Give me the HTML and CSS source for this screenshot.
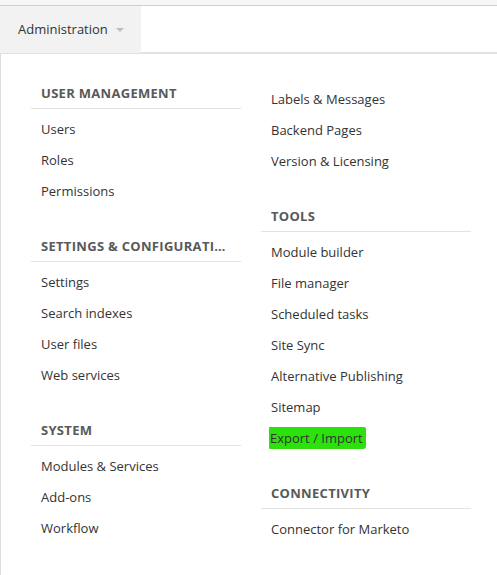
FILE: index.html
```html
<!DOCTYPE html>
<html>
<head>
<meta charset="utf-8">
<link rel="stylesheet" href="styles.css">
</head>
<body>
<div class="topstrip"></div>
<div class="header">
  <div class="tab">Administration <span class="caret"></span></div>
</div>
<div class="panel">
  <div class="col">
    <div class="section">
      <div class="heading">USER MANAGEMENT</div>
      <ul class="list">
        <li>Users</li>
        <li>Roles</li>
        <li>Permissions</li>
      </ul>
    </div>
    <div class="section">
      <div class="heading">SETTINGS &amp; CONFIGURATION</div>
      <ul class="list">
        <li>Settings</li>
        <li>Search indexes</li>
        <li>User files</li>
        <li>Web services</li>
      </ul>
    </div>
    <div class="section">
      <div class="heading">SYSTEM</div>
      <ul class="list">
        <li>Modules &amp; Services</li>
        <li>Add-ons</li>
        <li>Workflow</li>
      </ul>
    </div>
  </div>
  <div class="col">
    <div class="section">
      <ul class="list list-first">
        <li>Labels &amp; Messages</li>
        <li>Backend Pages</li>
        <li>Version &amp; Licensing</li>
      </ul>
    </div>
    <div class="section">
      <div class="heading">TOOLS</div>
      <ul class="list">
        <li>Module builder</li>
        <li>File manager</li>
        <li>Scheduled tasks</li>
        <li>Site Sync</li>
        <li>Alternative Publishing</li>
        <li>Sitemap</li>
        <li><span class="highlight">Export / Import</span></li>
      </ul>
    </div>
    <div class="section">
      <div class="heading">CONNECTIVITY</div>
      <ul class="list">
        <li>Connector for Marketo</li>
      </ul>
    </div>
  </div>
</div>
</body>
</html>
```

FILE: styles.css
```css
html, body {
  margin: 0;
  padding: 0;
  background: #ffffff;
}
body {
  font-family: "Open Sans", "Liberation Sans", sans-serif;
  font-size: 13px;
  color: #333333;
  height: 575px;
  overflow: hidden;
}
.topstrip {
  height: 5px;
  background: #f6f6f8;
  border-bottom: 1px solid #cfcfcf;
}
.header {
  height: 46px;
  border-bottom: 2px solid #e2e2e2;
  display: flex;
}
.tab {
  width: 123px;
  padding-left: 18px;
  padding-bottom: 2px;
  height: 45px;
  background: #f2f2f2;
  display: flex;
  align-items: center;
  gap: 8px;
  font-size: 13px;
  color: #333;
  margin-bottom: -1px;
}
.caret {
  width: 0;
  height: 0;
  border-left: 4px solid transparent;
  border-right: 4px solid transparent;
  border-top: 4px solid #bdbdbd;
  margin-top: 2px;
}
.panel {
  border-left: 1px solid #dddddd;
  height: 540px;
  padding: 29px 0 0 30px;
  display: flex;
  gap: 20px;
}
.col {
  width: 210px;
  display: flex;
  flex-direction: column;
  gap: 29px;
}
.heading {
  font-weight: 700;
  font-size: 13px;
  letter-spacing: 0.3px;
  color: #595959;
  line-height: 20px;
  padding: 0 10px 5px 10px;
  border-bottom: 1px solid #e3e3e3;
  white-space: nowrap;
  overflow: hidden;
  text-overflow: ellipsis;
}
.list {
  list-style: none;
  margin: 0;
  padding: 5px 0 0 0;
}
.list-first {
  padding-top: 1px;
}
.list li {
  line-height: 31px;
  height: 31px;
  padding-left: 10px;
  white-space: nowrap;
}
.highlight {
  background: #2ce20c;
  padding: 2px 3px 2px 1px;
  margin-left: -2px;
  border-radius: 1px 2px 3px 1px;
}
```
